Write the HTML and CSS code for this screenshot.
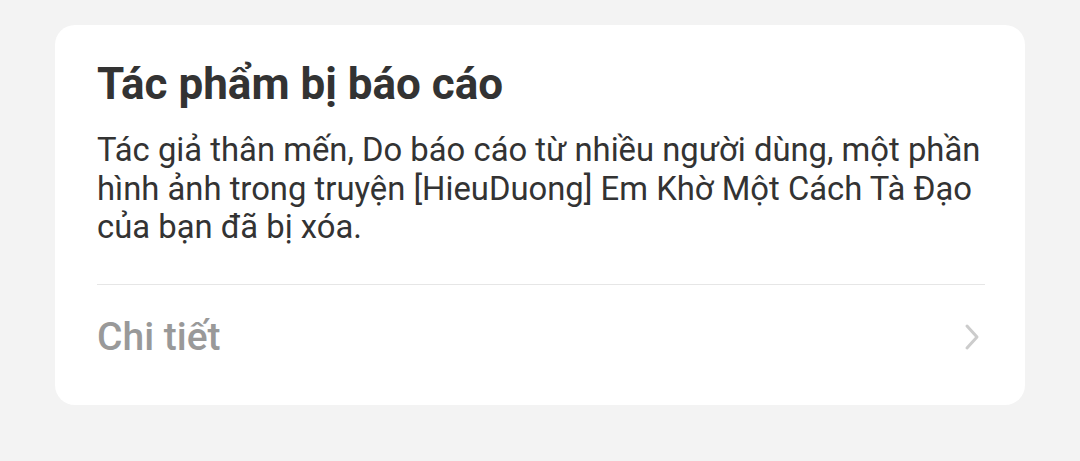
FILE: index.html
```html
<!DOCTYPE html>
<html lang="vi">

    <head>
        <meta charset="UTF-8">
        <meta name="viewport" content="width=device-width, initial-scale=1.0">
        <title>Tác phẩm bị báo cáo</title>
        <link rel="stylesheet" href="styles.css">
    </head>

    <body>
        <div class="notice">
            <div class="notice-body">
                <h2 class="notice-title">Tác phẩm bị báo cáo</h2>
                <p class="notice-text">Tác giả thân mến, Do báo cáo từ nhiều người dùng, một phần hình ảnh trong truyện [HieuDuong] Em Khờ Một Cách Tà Đạo của bạn đã bị xóa.</p>
            </div>
            <div class="notice-more">
                <span>Chi tiết</span>
                <svg class="arrow" width="16" height="28" viewBox="0 0 16 28">
                    <path d="M3 3 L13 14 L3 25" fill="none" stroke="#cccccc" stroke-width="3" stroke-linecap="round" stroke-linejoin="round" />
                </svg>
            </div>
        </div>
    </body>

</html>
```

FILE: styles.css
```css
* {
    padding: 0;
    margin: 0;
    box-sizing: border-box;
}

body {
    background: #f3f3f3;
    font-family: Roboto, "Noto Sans", sans-serif;
    padding: 25px 55px 0;
}

.notice {
    width: 970px;
    height: 380px;
    background: #fff;
    border-radius: 20px;
    padding: 0 40px 0 42px;
}

.notice-body {
    padding-top: 31px;
    padding-bottom: 37px;
    border-bottom: 1px solid #e6e6e6;
}

.notice-title {
    font-size: 44px;
    font-weight: 700;
    line-height: 56px;
    color: #333;
}

.notice-text {
    margin-top: 19px;
    font-size: 32.8px;
    line-height: 38.5px;
    color: #333;
}

.notice-more {
    display: flex;
    align-items: center;
    justify-content: space-between;
    height: 104px;
    padding-right: 5px;
}

.notice-more span {
    font-size: 39px;
    font-weight: 500;
    color: #999;
}

.arrow {
    display: block;
}
```
